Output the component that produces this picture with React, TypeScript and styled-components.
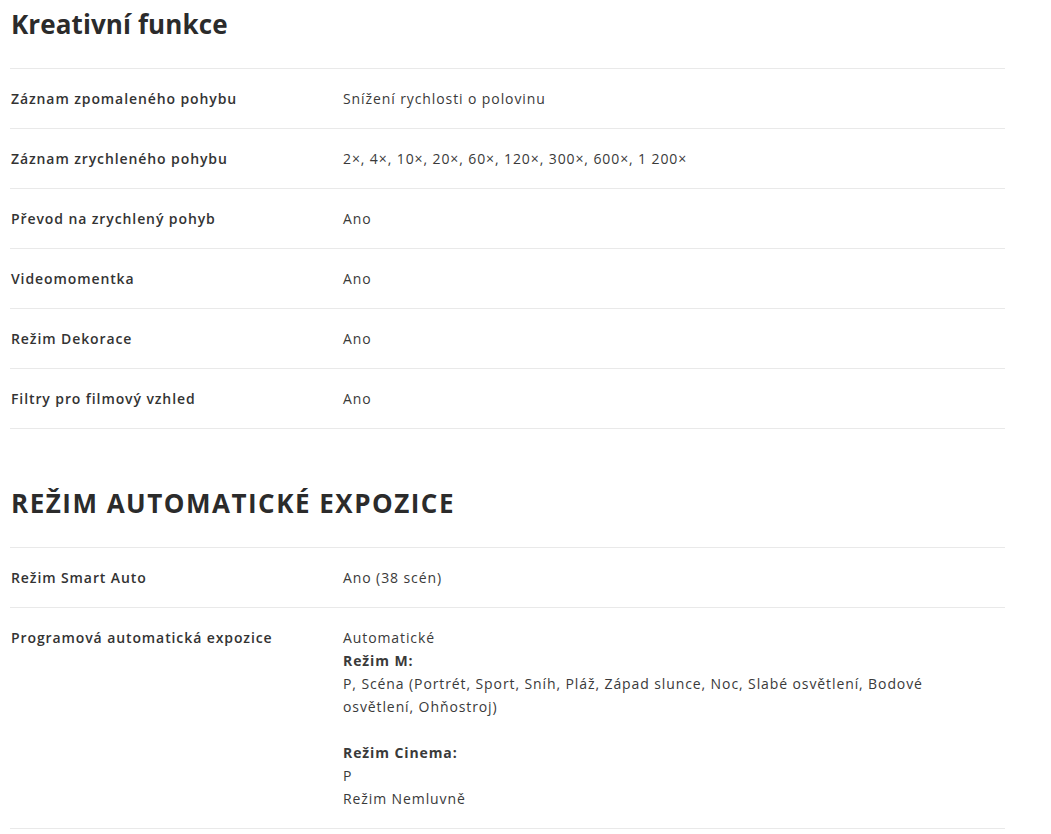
import styled, { createGlobalStyle } from 'styled-components';

const GlobalStyle = createGlobalStyle`
  body {
    margin: 0;
    background: #fff;
    font-family: "Open Sans", "Liberation Sans", sans-serif;
    color: #333;
  }
`;

const Page = styled.div`
  width: 995px;
  padding: 0 0 0 10px;
  display: flex;
  flex-direction: column;
  gap: 50px;
`;

const Section = styled.section``;

const Heading = styled.h2<{ $upper?: boolean }>`
  margin: 0;
  padding: 7px 0 0 1px;
  height: 68px;
  box-sizing: border-box;
  font-size: 26px;
  line-height: 34px;
  font-weight: 700;
  color: #2b2b2b;
  letter-spacing: ${(p) => (p.$upper ? '1.5px' : '0.1px')};
  text-transform: ${(p) => (p.$upper ? 'uppercase' : 'none')};
`;

const Table = styled.div`
  border-bottom: 1px solid #e9e9e9;
`;

const Row = styled.div`
  display: grid;
  grid-template-columns: 332px 1fr;
  border-top: 1px solid #e9e9e9;
  padding: 18px 0 18px 1px;
  font-size: 14px;
  line-height: 23px;
  letter-spacing: 0.9px;
`;

const Label = styled.div`
  font-weight: 600;
  color: #333;
`;

const Value = styled.div`
  color: #3a3a3a;
  padding-right: 40px;
`;

const Strong = styled.strong`
  font-weight: 700;
`;

type Spec = { label: string; value: React.ReactNode };

const creative: Spec[] = [
  { label: 'Záznam zpomaleného pohybu', value: 'Snížení rychlosti o polovinu' },
  { label: 'Záznam zrychleného pohybu', value: '2×, 4×, 10×, 20×, 60×, 120×, 300×, 600×, 1 200×' },
  { label: 'Převod na zrychlený pohyb', value: 'Ano' },
  { label: 'Videomomentka', value: 'Ano' },
  { label: 'Režim Dekorace', value: 'Ano' },
  { label: 'Filtry pro filmový vzhled', value: 'Ano' },
];

const exposure: Spec[] = [
  { label: 'Režim Smart Auto', value: 'Ano (38 scén)' },
  {
    label: 'Programová automatická expozice',
    value: (
      <>
        Automatické
        <br />
        <Strong>Režim M:</Strong>
        <br />
        P, Scéna (Portrét, Sport, Sníh, Pláž, Západ slunce, Noc, Slabé osvětlení, Bodové osvětlení, Ohňostroj)
        <br />
        <br />
        <Strong>Režim Cinema:</Strong>
        <br />
        P
        <br />
        Režim Nemluvně
      </>
    ),
  },
];

function SpecTable({ items }: { items: Spec[] }) {
  return (
    <Table>
      {items.map((item) => (
        <Row key={item.label}>
          <Label>{item.label}</Label>
          <Value>{item.value}</Value>
        </Row>
      ))}
    </Table>
  );
}

export default function App() {
  return (
    <Page>
      <GlobalStyle />
      <Section>
        <Heading>Kreativní funkce</Heading>
        <SpecTable items={creative} />
      </Section>
      <Section>
        <Heading $upper>Režim automatické expozice</Heading>
        <SpecTable items={exposure} />
      </Section>
    </Page>
  );
}
